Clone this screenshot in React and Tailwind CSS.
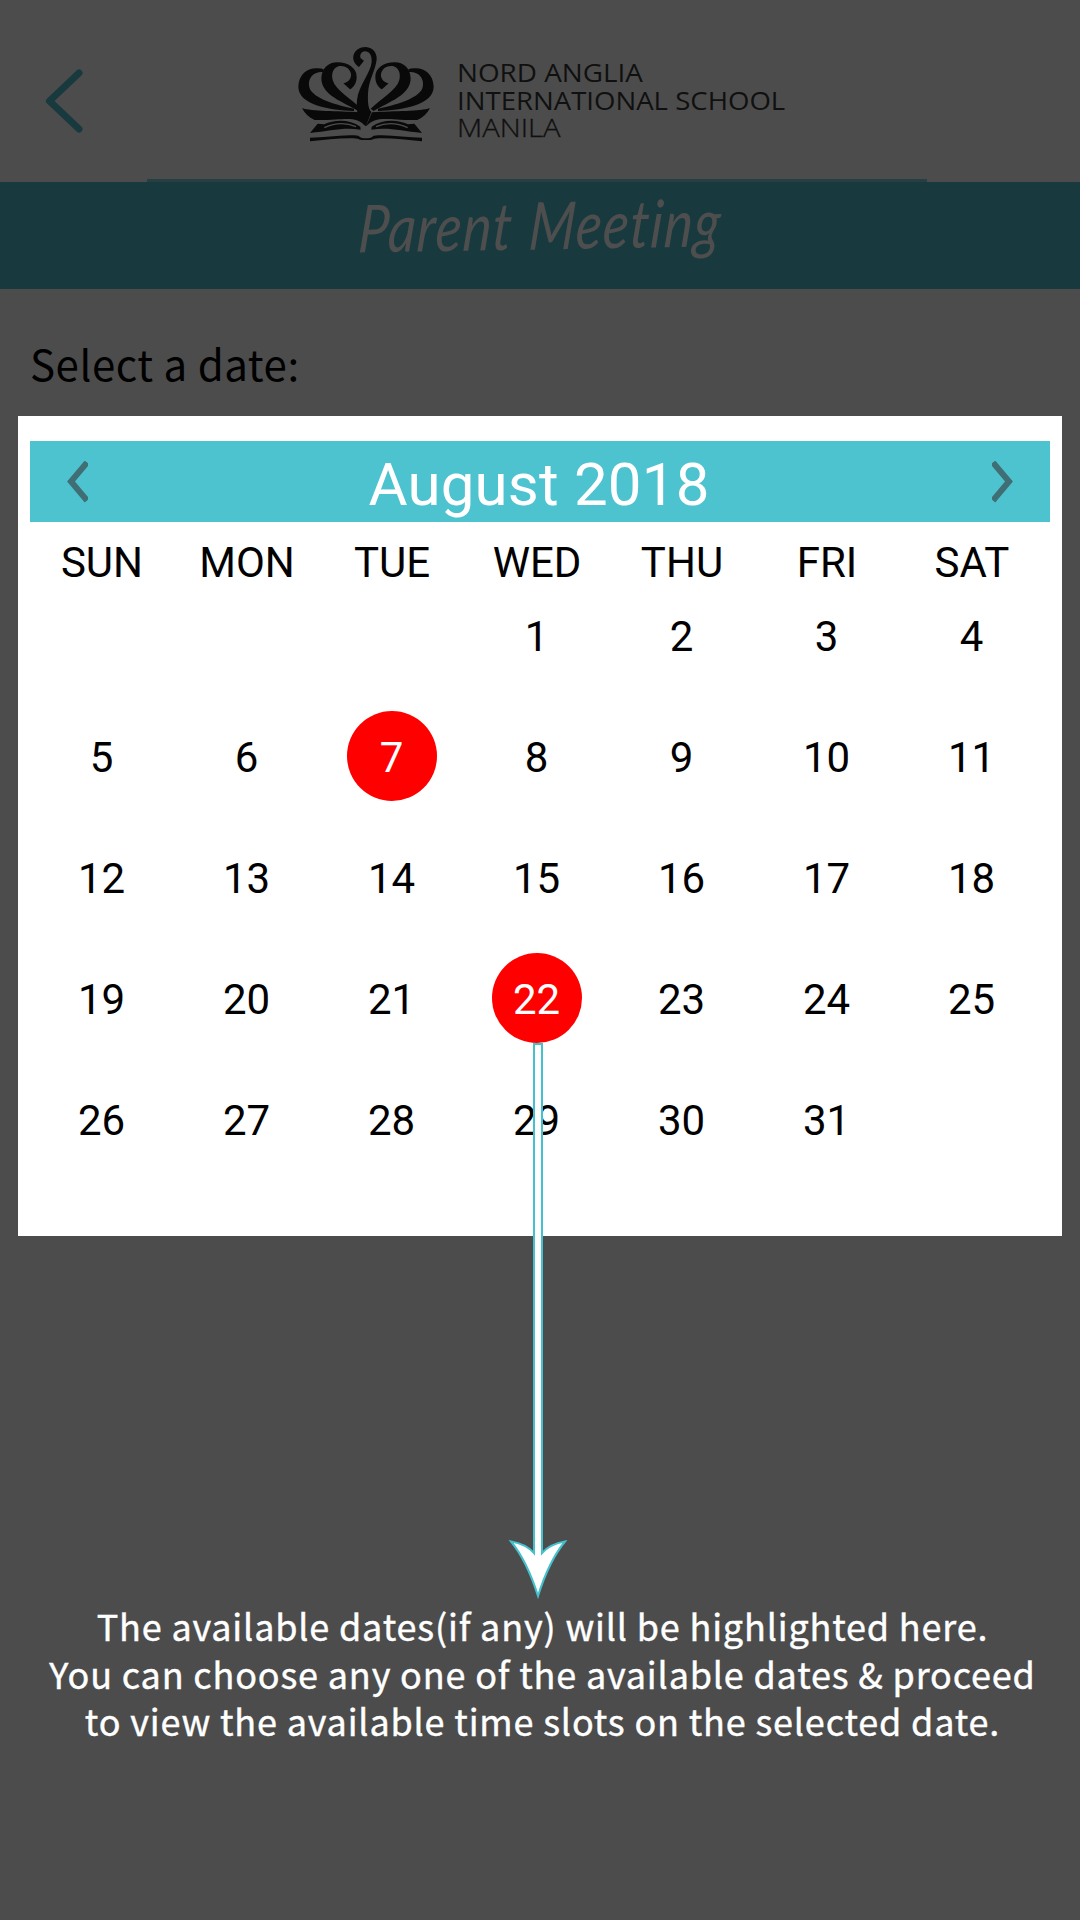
const weekdays = ["SUN", "MON", "TUE", "WED", "THU", "FRI", "SAT"];
const leadingBlanks = [0, 1, 2];
const days = Array.from({ length: 31 }, (_, i) => i + 1);
const available = [7, 22];

function HalfCrest() {
  return (
    <g>
      <path d="M235 243C190 216 124 196 124 145C125 115 145 97 172 97C205 97 230 115 230 140C230 158 222 171 210 178L190 160C202 158 215 148 213 132C210 115 195 106 178 108C160 112 153 130 158 150C166 180 212 206 244 236Z" />
      <path d="M222 243C150 240 55 225 55 170C56 135 80 115 108 115Q122 114 131 118L129 126C100 124 82 145 88 172C95 200 150 222 222 236Z" />
      <path d="M66 234C95 245 170 242 240 247L258 289C225 253 190 272 104 270C86 262 74 250 66 234Z" />
      <path d="M113 281L132 283C165 268 210 268 241 290L242 299C190 291 150 303 90 309Z" />
      <path d="M133 293C165 278 200 278 228 290" fill="none" stroke="#4c4c4c" strokeWidth="4" />
      <path d="M90 323C140 323 190 312 235 317C243 324 250 325 258 325V330C247 330 240 330 233 326C190 322 140 330 90 334Z" />
    </g>
  );
}

function Crest() {
  return (
    <svg className="h-[130px] w-[170px] shrink-0" viewBox="0 0 510 390" fill="#090909">
      <HalfCrest />
      <g transform="translate(516 0) scale(-1 1)">
        <HalfCrest />
      </g>
      <path d="M258 289C235 270 228 250 231 210C236 165 272 130 275 95C276 76 268 64 255 64C243 65 238 76 242 85L252 92L237 111C225 103 218 92 220 78C224 60 240 51 257 51C280 52 291 70 290 88C287 120 266 150 264 190C263 215 264 236 274 246Z" />
    </svg>
  );
}

function Chevron({ flip }) {
  return (
    <svg className={flip ? "h-[42px] w-[22px] -scale-x-100" : "h-[42px] w-[22px]"} viewBox="0 0 22 42" fill="none" stroke="#3f6f74" strokeWidth="6">
      <path d="M21 1.500L5 20.500L21 39.500" />
    </svg>
  );
}

function Day({ value }) {
  const marked = available.includes(value);
  return (
    <div className="relative flex h-[121px] items-start justify-center">
      <div
        className={
          marked
            ? "flex h-[90px] w-[90px] items-center justify-center rounded-full bg-[#ff0000] pt-[3px] text-white"
            : "flex h-[90px] w-[90px] items-center justify-center pt-[3px]"
        }
      >
        {value}
      </div>
      {value === 22 && (
        <svg className="absolute left-[43px] top-[90px] z-10 h-[560px] w-[64px]" viewBox="0 0 64 560" fill="#fff" stroke="#45c0cd" strokeWidth="2">
          <path d="M27 1H35V510Q43 501 58 498.500Q42 518 31 553Q20 518 4 498.500Q19 501 27 510Z" />
        </svg>
      )}
    </div>
  );
}

export default function App() {
  return (
    <div className="flex h-[1920px] w-[1080px] flex-col overflow-hidden bg-[#4c4c4c] text-black">
      <header className="flex h-[179px] items-start">
        <svg className="ml-[40px] mt-[66px] h-[70px] w-[48px]" viewBox="0 0 48 70" fill="none" stroke="#183a3e" strokeWidth="7" strokeLinecap="round" strokeLinejoin="round">
          <path d="M39 7L9.500 35L39 63" />
        </svg>
        <div className="ml-[192px] mt-[30px]">
          <Crest />
        </div>
        <div className="mt-[59px] whitespace-nowrap pl-[7px] font-['Open_Sans',sans-serif] text-[26px] leading-[27.500px] text-[#101010]">
          <div className="origin-left scale-x-[1.07] font-medium">NORD ANGLIA</div>
          <div className="origin-left scale-x-[1.06] font-medium">INTERNATIONAL SCHOOL</div>
          <div className="origin-left scale-x-[1.12] font-light [-webkit-text-stroke:0.3px_#101010]">MANILA</div>
        </div>
      </header>
      <div className="mx-auto h-[3px] w-[780px] -translate-x-[3px] bg-[#263f42]" />
      <div className="flex h-[107px] items-start justify-center bg-[#183a3e] pt-[8px] font-['Lato',sans-serif] text-[54px] italic leading-[70px] text-[#4e4e4e]">
        <h1 className="-rotate-1 -skew-x-6 scale-y-[1.22] tracking-[1.3px] [font-variant-ligatures:none] [word-spacing:2px]">Parent Meeting</h1>
      </div>
      <p className="h-[127px] pl-[30px] pt-[41px] font-['Noto_Sans_CJK_SC',sans-serif] text-[42px] leading-[66px] tracking-[0.55px]">Select a date:</p>

      <main className="mx-[18px] h-[820px] bg-white pt-[25px] font-['Roboto',sans-serif]">
        <div className="mx-[12px] flex h-[81px] items-center justify-between bg-[#4ec3d0] px-[36px]">
          <Chevron />
          <h2 className="-translate-x-px pt-[6px] text-[60px] leading-none tracking-[0.2px] text-white">August 2018</h2>
          <Chevron flip />
        </div>
        <div className="ml-[11px] grid w-[1015px] grid-cols-7 text-[42px] leading-none">
          {weekdays.map((name) => (
            <div key={name} className="flex h-[68px] items-center justify-center pl-px pt-[13px]">{name}</div>
          ))}
          {leadingBlanks.map((n) => (
            <div key={"blank" + n} />
          ))}
          {days.map((d) => (
            <Day key={d} value={d} />
          ))}
        </div>
      </main>

      <div className="mt-[366px] whitespace-nowrap pl-[5px] text-center font-['Noto_Sans_CJK_SC',sans-serif] text-[36px] leading-[47.500px] tracking-[0.820px] text-white [-webkit-text-stroke:0.4px_white]">
        <p>The available dates(if any) will be highlighted here.</p>
        <p>You can choose any one of the available dates &amp; proceed</p>
        <p>to view the available time slots on the selected date.</p>
      </div>
    </div>
  );
}
